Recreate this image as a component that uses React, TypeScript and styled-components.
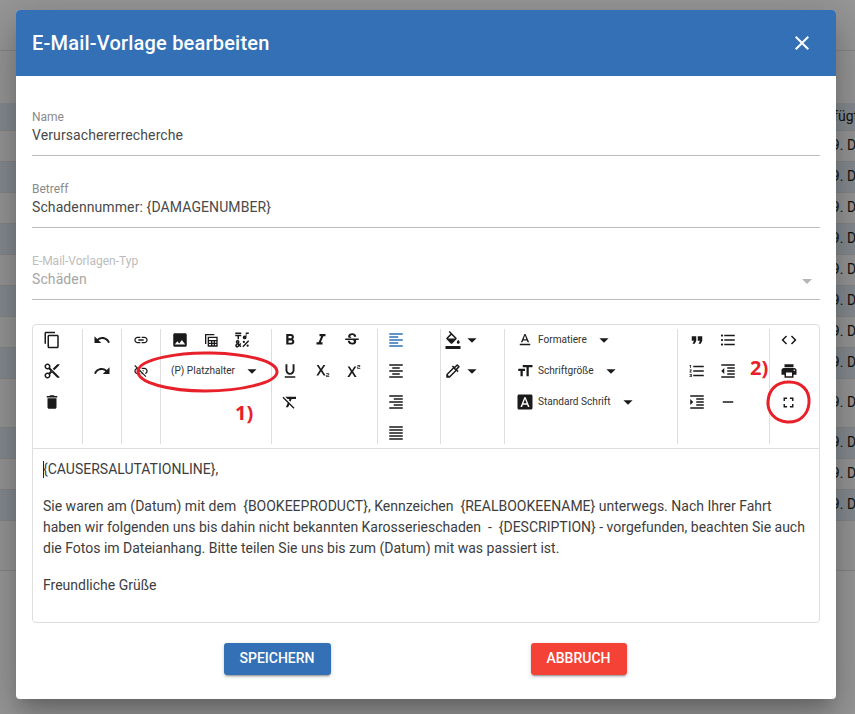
import React from "react";
import styled, { createGlobalStyle } from "styled-components";
import {
  MdContentCopy, MdContentCut, MdDelete, MdUndo, MdRedo, MdLink, MdLinkOff, MdImage,
  MdEmojiSymbols, MdFormatBold, MdFormatItalic, MdStrikethroughS, MdFormatUnderlined, MdSubscript, MdSuperscript,
  MdFormatClear, MdFormatAlignLeft, MdFormatAlignCenter, MdFormatAlignRight, MdFormatAlignJustify, MdFormatColorFill,
  MdOutlineColorize, MdTextFormat, MdFormatSize, MdFontDownload, MdFormatQuote, MdFormatListBulleted, MdFormatListNumbered,
  MdFormatIndentDecrease, MdFormatIndentIncrease, MdRemove, MdCode, MdPrint, MdFullscreen, MdClose, MdArrowDropDown,
} from "react-icons/md";

const Global = createGlobalStyle`
  html, body { margin: 0; padding: 0; background: #999; }
  body { font-family: Roboto, "Liberation Sans", sans-serif; }
`;

const Page = styled.div`
  position: relative;
  width: 855px;
  height: 714px;
  overflow: hidden;
  background: #999;
`;

const Table = styled.div`
  display: flex;
  flex-direction: column;
`;

const BgRow = styled.div<{ $h: number; $dark?: boolean; $line?: boolean; $indent?: number }>`
  box-sizing: border-box;
  height: ${(p) => p.$h}px;
  display: flex;
  align-items: center;
  padding: 0 0 2px ${(p) => p.$indent ?? 824}px;
  background: ${(p) => (p.$dark ? "#868c91" : "#979797")};
  border-bottom: 1px solid ${(p) => (p.$line === false ? "transparent" : "#868686")};
  font-size: 14px;
  color: #14120f;
  white-space: nowrap;
  overflow: hidden;
`;

const Modal = styled.div`
  position: absolute;
  left: 16px;
  top: 10px;
  width: 820px;
  height: 689px;
  background: #fff;
  border-radius: 4px;
  overflow: hidden;
  display: flex;
  flex-direction: column;
  box-shadow: 0 11px 15px -7px rgba(0, 0, 0, 0.2), 0 24px 38px 3px rgba(0, 0, 0, 0.14), 0 9px 46px 8px rgba(0, 0, 0, 0.12);
`;

const Header = styled.div`
  flex: none;
  height: 66px;
  background: #3370b5;
  color: #fff;
  display: flex;
  align-items: center;
  justify-content: space-between;
  padding: 0 22px 0 16px;
`;

const Title = styled.h2`
  margin: 0;
  font-size: 20px;
  font-weight: 500;
  line-height: 24px;
  letter-spacing: 0.2px;
`;

const CloseBtn = styled.span`
  display: flex;
  font-size: 24px;
  color: #fff;
`;

const Body = styled.div`
  padding: 34px 16px 0;
  display: flex;
  flex-direction: column;
`;

const Field = styled.div<{ $disabled?: boolean }>`
  position: relative;
  border-bottom: 1px solid #bdbdbd;
  margin-bottom: 26px;
  padding-bottom: 9px;
  color: ${(p) => (p.$disabled ? "#a6a6a6" : "#4a4a4a")};
`;

const FieldLabel = styled.div<{ $disabled?: boolean }>`
  font-size: 12px;
  line-height: 14px;
  color: ${(p) => (p.$disabled ? "#bcbcbc" : "#8a8a8a")};
`;

const FieldValue = styled.div`
  font-size: 14px;
  line-height: 21px;
  letter-spacing: 0.1px;
  padding-top: 1px;
`;

const SelectArrow = styled.span`
  position: absolute;
  right: 1px;
  top: 15px;
  display: flex;
  font-size: 24px;
  color: #b5b5b5;
`;

const Editor = styled.div`
  height: 299px;
  box-sizing: border-box;
  margin-top: -2px;
  border: 1px solid #dedede;
  border-radius: 4px;
  display: flex;
  flex-direction: column;
`;

const Toolbar = styled.div`
  flex: none;
  height: 124px;
  box-sizing: border-box;
  padding: 4px 0;
  display: flex;
  border-bottom: 1px solid #dedede;
`;

const Group = styled.div<{ $w: number; $pad?: number; $last?: boolean }>`
  flex: none;
  box-sizing: border-box;
  width: ${(p) => p.$w}px;
  padding-left: ${(p) => p.$pad ?? 3.5}px;
  border-right: ${(p) => (p.$last ? "none" : "1px solid #dedede")};
  display: grid;
  grid-template-columns: repeat(auto-fill, 31px);
  grid-auto-rows: 22px;
  row-gap: 9px;
  align-content: start;
`;

const Tool = styled.span<{ $active?: boolean; $size?: number; $stack?: boolean }>`
  display: flex;
  align-items: center;
  justify-content: center;
  grid-column: ${(p) => (p.$stack ? 1 : "auto")};
  font-size: ${(p) => p.$size ?? 18}px;
  color: ${(p) => (p.$active ? "#3370b5" : "#1a1a1a")};
`;

const Picker = styled.span`
  grid-column: 1 / -1;
  display: flex;
  align-items: center;
  font-size: 18px;
  color: #1a1a1a;
`;

const PickerIcon = styled.span`
  display: flex;
  width: 31px;
  justify-content: center;
`;

const PickerCaret = styled(MdArrowDropDown)`
  flex: none;
  font-size: 22px;
  margin-left: -1px;
`;

const Dropdown = styled.span<{ $indent: number }>`
  grid-column: 1 / -1;
  display: flex;
  align-items: center;
  padding-left: ${(p) => p.$indent}px;
  color: #333;
  font-size: 18px;
  white-space: nowrap;
`;

const DropIcon = styled.span`
  display: flex;
  margin-right: 4px;
  color: #1a1a1a;
`;

const DropText = styled.span`
  font-size: 10.1px;
  line-height: 14px;
`;

const DropCaret = styled(MdArrowDropDown)`
  flex: none;
  font-size: 22px;
  margin-left: 6px;
  color: #1a1a1a;
`;

const Content = styled.div`
  flex: 1;
  padding: 10px 10px 0;
  font-size: 14px;
  line-height: 21px;
  color: #3d3d3d;
`;

const Para = styled.p`
  margin: 0 0 16px;
  white-space: pre-wrap;
`;

const TextCaret = styled.span`
  display: inline-block;
  width: 1px;
  height: 17px;
  margin-right: -1px;
  background: #222;
  vertical-align: -4px;
`;

const Footer = styled.div`
  display: flex;
  justify-content: center;
  gap: 200px;
  margin-top: 20px;
  padding-right: 2px;
`;

const Button = styled.button<{ $tone: string; $w: number }>`
  width: ${(p) => p.$w}px;
  height: 32px;
  padding: 0 0 2px;
  border: none;
  border-radius: 3px;
  background: ${(p) => p.$tone};
  color: #fff;
  font-family: Roboto, sans-serif;
  font-size: 14px;
  font-weight: 500;
  text-transform: uppercase;
  box-shadow: 0 3px 1px -2px rgba(0, 0, 0, 0.2), 0 2px 2px 0 rgba(0, 0, 0, 0.14), 0 1px 5px 0 rgba(0, 0, 0, 0.12);
`;

const Marks = styled.svg`
  position: absolute;
  left: 0;
  top: 0;
  pointer-events: none;
`;

const Note = styled.span<{ $x: number; $y: number }>`
  position: absolute;
  left: ${(p) => p.$x}px;
  top: ${(p) => p.$y}px;
  font-family: "Open Sans", sans-serif;
  font-size: 20px;
  line-height: 24px;
  font-weight: 700;
  color: #e8202a;
`;

/* Table-with-shadow glyph from the toolbar: an L-shaped back sheet and a gridded front sheet. */
const TableIcon = () => (
  <svg width="1em" height="1em" viewBox="0 0 24 24" fill="currentColor">
    <path d="M3 3h14v2H5v13H3z" />
    <path d="M7 7h15v15H7zm2 2v3h11V9zm0 5v2h3v-2zm5 0v2h2v-2zm4 0v2h2v-2zM9 18v2h3v-2zm5 0v2h2v-2zm4 0v2h2v-2z" fillRule="evenodd" />
  </svg>
);

const rows: { h: number; dark?: boolean; line?: boolean; text?: string; indent?: number }[] = [
  { h: 51 },
  { h: 52, line: false },
  { h: 28, dark: true, text: "Hinzugefügt", indent: 782 },
  { h: 31, text: "19. Dez" },
  { h: 31, dark: true, text: "19. Dez" },
  { h: 31, text: "19. Dez" },
  { h: 31, dark: true, text: "19. Dez" },
  { h: 31, text: "19. Dez" },
  { h: 31, dark: true, text: "19. Dez" },
  { h: 31, text: "19. Dez" },
  { h: 31, dark: true, text: "19. Dez" },
  { h: 49, text: "19. Dez" },
  { h: 31, dark: true, text: "19. Dez" },
  { h: 31, text: "19. Dez" },
  { h: 31, dark: true, text: "19. Dez" },
  { h: 50 },
];

export default function App() {
  return (
    <Page>
      <Global />
      <Table>
        {rows.map((r, i) => (
          <BgRow key={i} $h={r.h} $dark={r.dark} $line={r.line} $indent={r.indent}>
            {r.text}
          </BgRow>
        ))}
      </Table>
      <Modal>
        <Header>
          <Title>E-Mail-Vorlage bearbeiten</Title>
          <CloseBtn><MdClose /></CloseBtn>
        </Header>
        <Body>
          <Field>
            <FieldLabel>Name</FieldLabel>
            <FieldValue>Verursachererrecherche</FieldValue>
          </Field>
          <Field>
            <FieldLabel>Betreff</FieldLabel>
            <FieldValue>Schadennummer: {"{DAMAGENUMBER}"}</FieldValue>
          </Field>
          <Field $disabled>
            <FieldLabel $disabled>E-Mail-Vorlagen-Typ</FieldLabel>
            <FieldValue>Schäden</FieldValue>
            <SelectArrow><MdArrowDropDown /></SelectArrow>
          </Field>
          <Editor>
            <Toolbar>
              <Group $w={50}>
                <Tool><MdContentCopy /></Tool>
                <Tool><MdContentCut /></Tool>
                <Tool><MdDelete /></Tool>
              </Group>
              <Group $w={39}>
                <Tool><MdUndo /></Tool>
                <Tool><MdRedo /></Tool>
              </Group>
              <Group $w={39}>
                <Tool $size={16}><MdLink /></Tool>
                <Tool $size={16}><MdLinkOff /></Tool>
              </Group>
              <Group $w={111}>
                <Tool><MdImage /></Tool>
                <Tool $size={16}><TableIcon /></Tool>
                <Tool><MdEmojiSymbols /></Tool>
                <Dropdown $indent={6.5}>
                  <DropText>(P) Platzhalter</DropText>
                  <DropCaret />
                </Dropdown>
              </Group>
              <Group $w={106} $pad={2.5}>
                <Tool><MdFormatBold /></Tool>
                <Tool><MdFormatItalic /></Tool>
                <Tool><MdStrikethroughS /></Tool>
                <Tool><MdFormatUnderlined /></Tool>
                <Tool><MdSubscript /></Tool>
                <Tool><MdSuperscript /></Tool>
                <Tool><MdFormatClear /></Tool>
              </Group>
              <Group $w={63} $pad={2.5}>
                <Tool $active><MdFormatAlignLeft /></Tool>
                <Tool $stack><MdFormatAlignCenter /></Tool>
                <Tool $stack><MdFormatAlignRight /></Tool>
                <Tool $stack><MdFormatAlignJustify /></Tool>
              </Group>
              <Group $w={64} $pad={3}>
                <Picker>
                  <PickerIcon><MdFormatColorFill /></PickerIcon>
                  <PickerCaret />
                </Picker>
                <Picker>
                  <PickerIcon><MdOutlineColorize /></PickerIcon>
                  <PickerCaret />
                </Picker>
              </Group>
              <Group $w={173} $pad={0}>
                <Dropdown $indent={11}>
                  <DropIcon><MdTextFormat /></DropIcon>
                  <DropText>Formatiere</DropText>
                  <DropCaret />
                </Dropdown>
                <Dropdown $indent={11}>
                  <DropIcon><MdFormatSize /></DropIcon>
                  <DropText>Schriftgröße</DropText>
                  <DropCaret />
                </Dropdown>
                <Dropdown $indent={11}>
                  <DropIcon><MdFontDownload /></DropIcon>
                  <DropText>Standard Schrift</DropText>
                  <DropCaret />
                </Dropdown>
              </Group>
              <Group $w={92} $pad={3.5}>
                <Tool><MdFormatQuote /></Tool>
                <Tool><MdFormatListBulleted /></Tool>
                <Tool><MdFormatListNumbered /></Tool>
                <Tool><MdFormatIndentDecrease /></Tool>
                <Tool><MdFormatIndentIncrease /></Tool>
                <Tool><MdRemove /></Tool>
              </Group>
              <Group $w={49} $pad={3} $last>
                <Tool><MdCode /></Tool>
                <Tool><MdPrint /></Tool>
                <Tool $size={17}><MdFullscreen /></Tool>
              </Group>
            </Toolbar>
            <Content>
              <Para><TextCaret />{"{CAUSERSALUTATIONLINE},"}</Para>
              <Para>
                {"Sie waren am (Datum) mit dem  {BOOKEEPRODUCT}, Kennzeichen  {REALBOOKEENAME} unterwegs. Nach Ihrer Fahrt haben wir folgenden uns bis dahin nicht bekannten Karosserieschaden  -  {DESCRIPTION} - vorgefunden, beachten Sie auch die Fotos im Dateianhang. Bitte teilen Sie uns bis zum (Datum) mit was passiert ist."}
              </Para>
              <Para>Freundliche Grüße</Para>
            </Content>
          </Editor>
          <Footer>
            <Button $tone="#3370b5" $w={107}>Speichern</Button>
            <Button $tone="#f44336" $w={96}>Abbruch</Button>
          </Footer>
        </Body>
      </Modal>
      <Marks width="855" height="714" viewBox="0 0 855 714" fill="none" stroke="#e8202a" strokeWidth="3">
        <path d="M138 371 C139 359 180 352 212 353 C248 354 277 361 277 372 C277 383 240 391 205 391 C170 391 137 383 138 371 Z" />
        <path d="M787 382 C802 381 810 391 809 403 C808 415 799 423 787 422 C775 421 767 412 768 401 C769 390 776 382 789 382" />
      </Marks>
      <Note $x={235} $y={401}>1)</Note>
      <Note $x={750} $y={356}>2)</Note>
    </Page>
  );
}
